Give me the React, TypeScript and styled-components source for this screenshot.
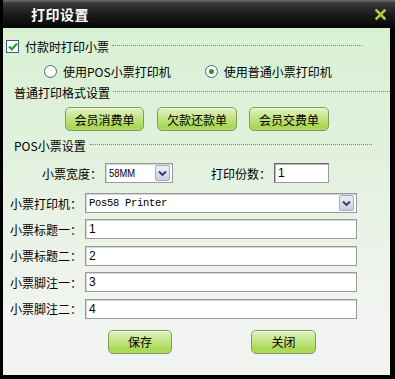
import React from "react";
import styled, { createGlobalStyle } from "styled-components";

const Global = createGlobalStyle`
  html, body { margin: 0; padding: 0; background: #000; }
  * { box-sizing: border-box; }
`;

const FONT = `"Noto Sans CJK SC", "Noto Sans", sans-serif`;

const Window = styled.div`
  width: 395px;
  height: 379px;
  background: #000;
  display: flex;
  flex-direction: column;
  font-family: ${FONT};
  font-size: 12px;
  color: #000;
  overflow: hidden;
`;

const TitleBar = styled.div`
  height: 28px;
  flex: none;
  display: flex;
  align-items: center;
  justify-content: space-between;
  padding: 0 9px 0 28px;
  background: linear-gradient(180deg, #707070 0px, #3a3a3a 3px, #1c1c1c 14px, #050505 28px);
  border-left: 3px solid #000;
`;

const Title = styled.span`
  color: #fff;
  font-size: 14px;
  font-weight: bold;
  letter-spacing: 0.5px;
`;

const Body = styled.div`
  flex: 1;
  margin: 0 5px 4px 3px;
  background: linear-gradient(180deg, #d8f1d4 0%, #e1f1dd 35%, #ecf3ea 65%, #f2f4f2 88%, #f2f4f2 100%);
  display: flex;
  flex-direction: column;
`;

const Row = styled.div<{ $top: number; $left: number; $h?: number }>`
  display: flex;
  align-items: center;
  margin-top: ${(p) => p.$top}px;
  padding-left: ${(p) => p.$left}px;
  height: ${(p) => p.$h ?? 20}px;
  white-space: nowrap;
`;

const Dotted = styled.div<{ $w: number; $gap: number }>`
  width: ${(p) => p.$w}px;
  margin-left: ${(p) => p.$gap}px;
  border-top: 1px dotted #6f8496;
  align-self: center;
  transform: translateY(-1px);
`;

const Check = styled.span`
  width: 13px;
  height: 13px;
  border: 1px solid #3d5a78;
  background: #fff;
  display: inline-flex;
  align-items: center;
  justify-content: center;
  margin-right: 6px;
`;

const Radio = styled.span<{ $on?: boolean }>`
  width: 13px;
  height: 13px;
  border-radius: 50%;
  border: 1px solid #4a6788;
  background: radial-gradient(circle at 50% 50%, #fff 60%, #dde4ec 100%);
  display: inline-flex;
  align-items: center;
  justify-content: center;
  margin-right: 6px;
  &::after {
    content: "";
    width: 5px;
    height: 5px;
    border-radius: 50%;
    background: ${(p) => (p.$on ? "#2a9a2a" : "transparent")};
  }
`;

const RadioItem = styled.label<{ $gap?: number }>`
  display: inline-flex;
  align-items: center;
  margin-left: ${(p) => p.$gap ?? 0}px;
`;

const GreenButton = styled.button<{ $w: number; $gap?: number }>`
  width: ${(p) => p.$w}px;
  height: 24px;
  margin-left: ${(p) => p.$gap ?? 0}px;
  border: 1px solid #7f9a5e;
  border-radius: 5px;
  background: linear-gradient(180deg, #e2f3c4 0%, #c8e68e 40%, #a9d752 85%, #b6dc6c 100%);
  box-shadow: inset 0 1px 0 rgba(255, 255, 255, 0.6);
  font-family: ${FONT};
  font-size: 12px;
  color: #000;
  padding: 0;
  cursor: pointer;
`;

const Label = styled.span<{ $gap?: number }>`
  margin-left: ${(p) => p.$gap ?? 0}px;
  margin-right: 3px;
`;

const Field = styled.div<{ $w: number; $inset?: boolean }>`
  width: ${(p) => p.$w}px;
  height: 20px;
  background: #fff;
  border: 1px solid #999;
  border-top-color: ${(p) => (p.$inset ? "#666" : "#999")};
  border-left-color: ${(p) => (p.$inset ? "#666" : "#999")};
  box-shadow: inset 1px 1px 0 ${(p) => (p.$inset ? "#bbb" : "#d4d4d4")};
  display: flex;
  align-items: center;
  padding: 0 2px 0 3px;
  font-family: "Liberation Sans", sans-serif;
  font-size: 12px;
`;

const FieldText = styled.span<{ $mono?: boolean }>`
  flex: 1;
  font-family: ${(p) => (p.$mono ? `"Liberation Mono", monospace` : `"Liberation Sans", sans-serif`)};
  font-size: ${(p) => (p.$mono ? 10.5 : 12)}px;
  letter-spacing: ${(p) => (p.$mono ? "-0.3px" : "0")};
`;

const SmallText = styled.span`
  flex: 1;
  font-family: "Liberation Sans", sans-serif;
  font-size: 11px;
  transform: scaleX(0.85);
  transform-origin: left center;
`;

const ArrowBox = styled.span`
  width: 15px;
  height: 16px;
  border: 1px solid #a3aac4;
  border-radius: 2px;
  background: linear-gradient(180deg, #eef0f8, #c9cde0);
  display: inline-flex;
  align-items: center;
  justify-content: center;
`;

const FormRows = styled.div`
  display: flex;
  flex-direction: column;
  gap: 6.6px;
  margin-top: 6px;
`;

const Arrow = () => (
  <ArrowBox>
    <svg width="9" height="7" viewBox="0 0 9 7">
      <path d="M1 1.5 L4.5 5 L8 1.5" fill="none" stroke="#2b3a66" strokeWidth="1.8" />
    </svg>
  </ArrowBox>
);

const CheckMark = () => (
  <svg width="10" height="9" viewBox="0 0 10 9">
    <path d="M1 4.5 L3.8 7.3 L9 1.5" fill="none" stroke="#22a33a" strokeWidth="2.2" />
  </svg>
);

const CloseIcon = () => (
  <svg width="11" height="11" viewBox="0 0 11 11">
    <path d="M1.5 1.5 L9.5 9.5 M9.5 1.5 L1.5 9.5" stroke="#a6d23c" strokeWidth="2.6" strokeLinecap="square" />
  </svg>
);

const fields = [
  { label: "小票标题一：", value: "1" },
  { label: "小票标题二：", value: "2" },
  { label: "小票脚注一：", value: "3" },
  { label: "小票脚注二：", value: "4" },
];

export default function App() {
  return (
    <>
      <Global />
      <Window>
        <TitleBar>
          <Title>打印设置</Title>
          <CloseIcon />
        </TitleBar>
        <Body>
          <Row $top={8} $left={3}>
            <Check>
              <CheckMark />
            </Check>
            <span>付款时打印小票</span>
            <Dotted $w={250} $gap={3} />
          </Row>
          <Row $top={5} $left={41}>
            <RadioItem>
              <Radio />
              使用POS小票打印机
            </RadioItem>
            <RadioItem $gap={34}>
              <Radio $on />
              使用普通小票打印机
            </RadioItem>
          </Row>
          <Row $top={1} $left={11}>
            <span>普通打印格式设置</span>
            <Dotted $w={290} $gap={3} />
          </Row>
          <Row $top={5} $left={62} $h={24}>
            <GreenButton $w={79}>会员消费单</GreenButton>
            <GreenButton $w={80} $gap={13}>欠款还款单</GreenButton>
            <GreenButton $w={80} $gap={12}>会员交费单</GreenButton>
          </Row>
          <Row $top={4} $left={11}>
            <span>POS小票设置</span>
            <Dotted $w={282} $gap={4} />
          </Row>
          <Row $top={8} $left={39}>
            <Label>小票宽度：</Label>
            <Field $w={68}>
              <SmallText>58MM</SmallText>
              <Arrow />
            </Field>
            <Label $gap={38}>打印份数：</Label>
            <Field $w={55} $inset>
              <FieldText>1</FieldText>
            </Field>
          </Row>
          <Row $top={10} $left={7}>
            <Label>小票打印机：</Label>
            <Field $w={272}>
              <FieldText $mono>Pos58 Printer</FieldText>
              <Arrow />
            </Field>
          </Row>
          <FormRows>
            {fields.map((f) => (
              <Row key={f.label} $top={0} $left={7}>
                <Label>{f.label}</Label>
                <Field $w={272}>
                  <FieldText>{f.value}</FieldText>
                </Field>
              </Row>
            ))}
          </FormRows>
          <Row $top={11} $left={105} $h={24}>
            <GreenButton $w={64}>保存</GreenButton>
            <GreenButton $w={65} $gap={79}>关闭</GreenButton>
          </Row>
        </Body>
      </Window>
    </>
  );
}
